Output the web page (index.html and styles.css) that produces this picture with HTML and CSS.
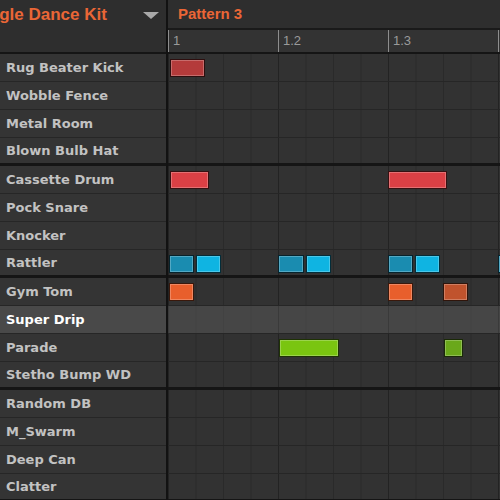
FILE: index.html
```html
<!DOCTYPE html>
<html lang="en">
<head>
    <meta charset="UTF-8">
    <title>Pattern Editor</title>
    <link rel="stylesheet" href="styles.css">
</head>
<body>
    <div class="app">
        <div class="side">
            <div class="kit-head">
                <span class="kit-name">Jungle Dance Kit</span>
                <span class="drop"></span>
            </div>
            <ul class="sounds">
                <li class="sound">Rug Beater Kick</li>
                <li class="sound">Wobble Fence</li>
                <li class="sound">Metal Room</li>
                <li class="sound">Blown Bulb Hat</li>
                <li class="sound">Cassette Drum</li>
                <li class="sound">Pock Snare</li>
                <li class="sound">Knocker</li>
                <li class="sound">Rattler</li>
                <li class="sound">Gym Tom</li>
                <li class="sound current">Super Drip</li>
                <li class="sound">Parade</li>
                <li class="sound">Stetho Bump WD</li>
                <li class="sound">Random DB</li>
                <li class="sound">M_Swarm</li>
                <li class="sound">Deep Can</li>
                <li class="sound">Clatter</li>
            </ul>
        </div>

        <div class="main">
            <div class="pattern-bar">Pattern 3</div>
            <div class="ruler">
                <span class="beat">1</span>
                <span class="beat">1.2</span>
                <span class="beat">1.3</span>
                <span class="beat"></span>
            </div>
            <div class="lanes">
                <!-- Rug Beater Kick -->
                <div class="lane">
                    <div class="note kick" style="left: 2px; width: 35px;"></div>
                </div>
                <div class="lane"></div>
                <div class="lane"></div>
                <div class="lane"></div>
                <!-- Cassette Drum -->
                <div class="lane">
                    <div class="note snare" style="left: 2px; width: 39px;"></div>
                    <div class="note snare" style="left: 220px; width: 59px;"></div>
                </div>
                <div class="lane"></div>
                <div class="lane"></div>
                <!-- Rattler -->
                <div class="lane">
                    <div class="note rattle-lo" style="left: 1px; width: 25px;"></div>
                    <div class="note rattle-hi" style="left: 28px; width: 25px;"></div>
                    <div class="note rattle-lo" style="left: 110px; width: 26px;"></div>
                    <div class="note rattle-hi" style="left: 138px; width: 25px;"></div>
                    <div class="note rattle-lo" style="left: 220px; width: 25px;"></div>
                    <div class="note rattle-hi" style="left: 247px; width: 25px;"></div>
                    <div class="note rattle-lo" style="left: 330px; width: 25px;"></div>
                </div>
                <!-- Gym Tom -->
                <div class="lane">
                    <div class="note tom" style="left: 1px; width: 25px;"></div>
                    <div class="note tom" style="left: 220px; width: 25px;"></div>
                    <div class="note tom-soft" style="left: 275px; width: 25px;"></div>
                </div>
                <div class="lane current"></div>
                <!-- Parade -->
                <div class="lane">
                    <div class="note parade" style="left: 111px; width: 60px;"></div>
                    <div class="note parade-soft" style="left: 276px; width: 19px;"></div>
                </div>
                <div class="lane"></div>
                <div class="lane"></div>
                <div class="lane"></div>
                <div class="lane"></div>
                <div class="lane"></div>
            </div>
        </div>
    </div>
</body>
</html>
```

FILE: styles.css
```css
* { margin: 0; padding: 0; box-sizing: border-box; }
body {
    background: #323232;
    font-family: "Liberation Sans", Arial, sans-serif;
    overflow: hidden;
}
.app {
    display: grid;
    grid-template-columns: 166px 1fr;
    width: 500px;
    height: 500px;
    overflow: hidden;
}

/* left column: kit + sound list */
.side {
    background: #343434;
}
.kit-head {
    display: flex;
    align-items: flex-start;
    height: 54px;
    background: #2e2e2e;
    border-bottom: 2px solid #151515;
}
.kit-name {
    flex: 1;
    overflow: hidden;
    white-space: nowrap;
    text-indent: -31px;
    color: #ea6636;
    font-weight: bold;
    font-size: 17px;
    line-height: 30px;
}
.drop {
    width: 0;
    height: 0;
    margin: 12px 7px 0 0;
    border-left: 8px solid transparent;
    border-right: 8px solid transparent;
    border-top: 7px solid #a9a9a9;
}
.sounds {
    list-style: none;
}
.sound {
    height: 28px;
    padding: 1px 0 0 6px;
    border-bottom: 1px solid #262626;
    color: #c2c2c2;
    font-family: "DejaVu Sans", sans-serif;
    font-weight: bold;
    font-size: 13px;
    line-height: 26px;
    white-space: nowrap;
}
.sound:nth-child(4n) {
    border-bottom: 3px solid #151515;
    line-height: 24px;
}
.sound.current {
    background: #494949;
    color: #fff;
}

/* right column: pattern grid */
.main {
    display: flex;
    flex-direction: column;
    min-width: 0;
    border-left: 2px solid #121212;
}
.pattern-bar {
    height: 30px;
    padding-left: 10px;
    background: #2e2e2e;
    border-bottom: 2px solid #1a1a1a;
    color: #ea6636;
    font-weight: bold;
    font-size: 15px;
    line-height: 28px;
}
.ruler {
    display: flex;
    height: 24px;
    background: #333;
    border-bottom: 2px solid #151515;
}
.beat {
    flex: none;
    width: 110px;
    padding-left: 4px;
    border-left: 1px solid #8e8e8e;
    color: #9a9a9a;
    font-size: 13px;
    line-height: 22px;
}
.lane {
    position: relative;
    height: 28px;
    border-bottom: 1px solid #262626;
    background-color: #323232;
    background-image:
        linear-gradient(to right, #232323 1px, transparent 1px),
        linear-gradient(to right, #2a2a2a 1px, transparent 1px);
    background-size: 110px 100%, 27.5px 100%;
}
.lane:nth-child(4n) {
    border-bottom: 3px solid #151515;
}
.lane.current {
    background-color: #464646;
    background-image:
        linear-gradient(to right, #3a3a3a 1px, transparent 1px),
        linear-gradient(to right, #424242 1px, transparent 1px);
}

.note {
    position: absolute;
    top: 5px;
    height: 18px;
    border: 1px solid rgba(0,0,0,0.75);
    box-shadow: inset 0 0 0 1px rgba(255,255,255,0.25);
}
.kick { background: #b43b3b; }
.snare { background: #dc4045; }
.rattle-lo { background: #1a8cb0; }
.rattle-hi { background: #0fb4e2; }
.tom { background: #e85f2c; }
.tom-soft { background: #c0532d; }
.parade { background: #7ac510; }
.parade-soft { background: #6aa81a; }
```
